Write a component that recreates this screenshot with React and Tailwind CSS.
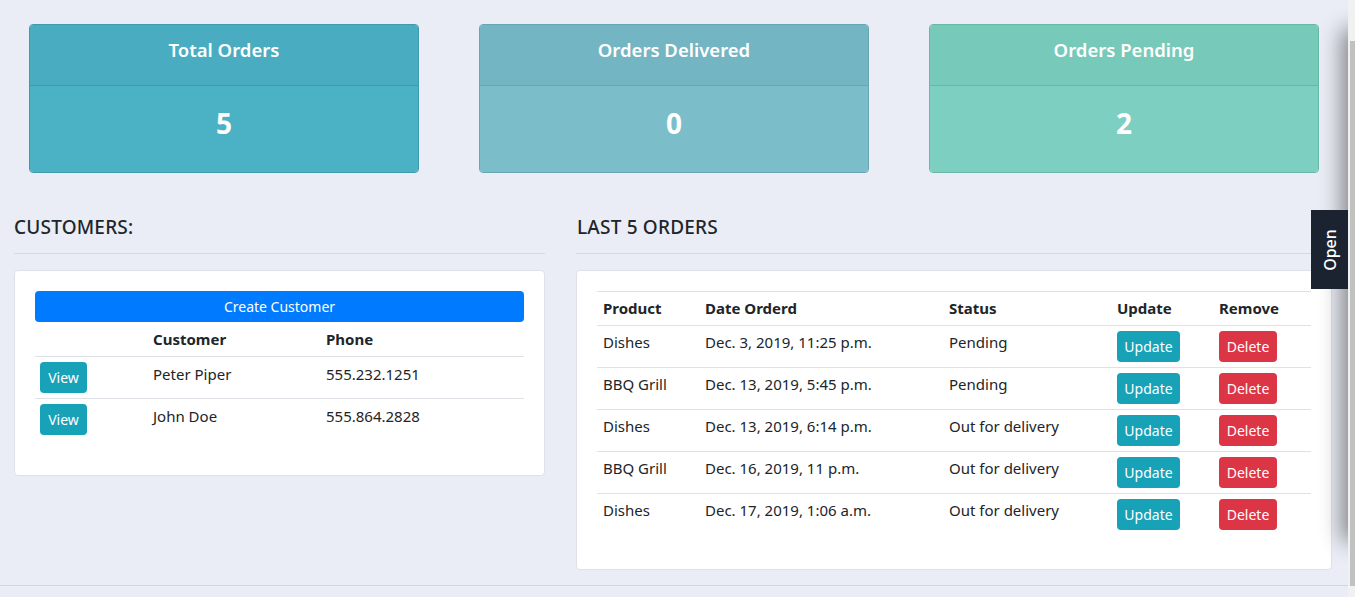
import React from "react";

const orders = [
  ["Dishes", "Dec. 3, 2019, 11:25 p.m.", "Pending"],
  ["BBQ Grill", "Dec. 13, 2019, 5:45 p.m.", "Pending"],
  ["Dishes", "Dec. 13, 2019, 6:14 p.m.", "Out for delivery"],
  ["BBQ Grill", "Dec. 16, 2019, 11 p.m.", "Out for delivery"],
  ["Dishes", "Dec. 17, 2019, 1:06 a.m.", "Out for delivery"],
];

function StatCard({ title, value, head, body, border }) {
  return (
    <div className={`w-[390px] h-[149px] rounded-[4px] border overflow-hidden flex flex-col ${border}`}>
      <div className={`h-[61px] shrink-0 flex items-center justify-center border-b pb-[10px] ${head} ${border}`}>
        <span className="text-white text-[18.5px] font-semibold">{title}</span>
      </div>
      <div className={`flex-1 flex items-center justify-center pb-[12px] ${body}`}>
        <span className="text-white text-[28px] font-bold">{value}</span>
      </div>
    </div>
  );
}

export default function App() {
  return (
    <div
      className="relative w-[1355px] h-[597px] overflow-hidden bg-[#eaedf5] text-[#212529]"
      style={{ fontFamily: '"Noto Sans", "Open Sans", sans-serif' }}
    >
      <div className="w-[1348px] h-[586px] border-b border-[#d3d6dc]">
        {/* Stat cards */}
        <div className="flex pt-[24px] pl-[29px] gap-[60px]">
          <StatCard title="Total Orders" value="5" head="bg-[#49acc0]" body="bg-[#4bb2c6]" border="border-[#3f9aab]" />
          <StatCard title="Orders Delivered" value="0" head="bg-[#74b5c3]" body="bg-[#7bbeca]" border="border-[#68a6b3]" />
          <StatCard title="Orders Pending" value="2" head="bg-[#77c9b9]" body="bg-[#7dd0c1]" border="border-[#6ab7a8]" />
        </div>

        <div className="flex mt-[39px] pl-[14px] gap-[31px]">
          {/* Customers */}
          <div className="w-[531px]">
            <h5 className="text-[19px] font-medium leading-[30px] h-[30px] tracking-[0.2px]">CUSTOMERS:</h5>
            <div className="mt-[11px] border-t border-[#d6d9e0]" />
            <div className="mt-[16px] bg-white border border-[#dee2e6] rounded-[4px] px-[20px] pt-[20px] h-[206px]">
              <div className="h-[31px] bg-[#007bff] rounded-[4px] flex items-center justify-center text-white text-[14px]">
                Create Customer
              </div>
              <table className="w-full text-[15px] border-collapse">
                <thead>
                  <tr className="h-[34px] text-left">
                    <th className="w-[113px]"></th>
                    <th className="w-[173px] px-[5px] font-bold">Customer</th>
                    <th className="px-[5px] font-bold">Phone</th>
                  </tr>
                </thead>
                <tbody>
                  {[
                    ["Peter Piper", "555.232.1251"],
                    ["John Doe", "555.864.2828"],
                  ].map(([n, p]) => (
                    <tr key={n} className="h-[42px] border-t border-[#dee2e6] align-top">
                      <td className="px-[5px] pt-[5px]">
                        <div className="w-[47px] h-[31px] rounded-[4px] bg-[#17a2b8] text-white text-[14px] flex items-center justify-center">
                          View
                        </div>
                      </td>
                      <td className="px-[5px] pt-[6px]">{n}</td>
                      <td className="px-[5px] pt-[6px]">{p}</td>
                    </tr>
                  ))}
                </tbody>
              </table>
            </div>
          </div>

          {/* Orders */}
          <div className="flex-1">
            <h5 className="text-[19px] font-medium leading-[30px] h-[30px] pl-[1px] tracking-[0.2px]">LAST 5 ORDERS</h5>
            <div className="mt-[11px] border-t border-[#d6d9e0]" />
            <div className="mt-[16px] mr-[16px] bg-white border border-[#dee2e6] rounded-[4px] px-[20px] pt-[20px] h-[300px]">
              <table className="w-full text-[15px] border-collapse">
                <thead>
                  <tr className="h-[34px] text-left border-t border-[#dee2e6]">
                    <th className="w-[102px] px-[6px] font-bold">Product</th>
                    <th className="w-[245px] px-[6px] font-bold">Date Orderd</th>
                    <th className="w-[168px] px-[5px] font-bold">Status</th>
                    <th className="w-[102px] px-[5px] font-bold">Update</th>
                    <th className="px-[5px] font-bold">Remove</th>
                  </tr>
                </thead>
                <tbody>
                  {orders.map((o, i) => (
                    <tr key={i} className="h-[42px] border-t border-[#dee2e6] align-top">
                      <td className="px-[6px] pt-[5px]">{o[0]}</td>
                      <td className="px-[6px] pt-[5px]">{o[1]}</td>
                      <td className="px-[5px] pt-[5px]">{o[2]}</td>
                      <td className="px-[5px] pt-[5px]">
                        <div className="w-[63px] h-[31px] rounded-[4px] bg-[#17a2b8] text-white text-[14px] flex items-center justify-center">
                          Update
                        </div>
                      </td>
                      <td className="px-[5px] pt-[5px]">
                        <div className="w-[58px] h-[31px] rounded-[4px] bg-[#dc3545] text-white text-[14px] flex items-center justify-center">
                          Delete
                        </div>
                      </td>
                    </tr>
                  ))}
                </tbody>
              </table>
            </div>
          </div>
        </div>
      </div>

      {/* Off-canvas sidebar shadow */}
      <div className="absolute left-[1348px] top-[35px] w-[20px] h-[500px] bg-[#eaedf5] shadow-[0_0_22px_6px_rgba(0,0,0,0.45)]" />

      {/* Open tab */}
      <div className="absolute left-[1311px] top-[210px] w-[37px] h-[79px] bg-[#1b2331] flex items-center justify-center">
        <span className="text-white text-[16px] font-medium -rotate-90 whitespace-nowrap">Open</span>
      </div>

      {/* Scrollbar */}
      <div className="absolute left-[1348px] top-0 w-[7px] h-[597px] bg-[#f1f1f1]">
        <div className="absolute left-[2px] top-[41px] w-[5px] h-[545px] bg-[#c1c1c1]" />
      </div>
    </div>
  );
}
